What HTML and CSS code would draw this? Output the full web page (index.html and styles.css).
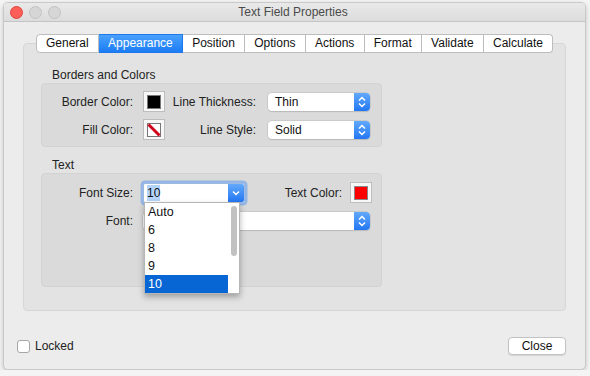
FILE: index.html
```html
<!DOCTYPE html>
<html lang="en">
<head>
    <meta charset="UTF-8">
    <title>Text Field Properties</title>
    <link rel="stylesheet" href="styles.css">
</head>
<body>
    <div class="window">
        <div class="titlebar">
            <div class="lights">
                <span class="light light-close"></span>
                <span class="light"></span>
                <span class="light"></span>
            </div>
            <div class="title">Text Field Properties</div>
        </div>
        <div class="content">
            <div class="tabs">
                <span class="tab">General</span>
                <span class="tab active">Appearance</span>
                <span class="tab">Position</span>
                <span class="tab">Options</span>
                <span class="tab">Actions</span>
                <span class="tab">Format</span>
                <span class="tab">Validate</span>
                <span class="tab">Calculate</span>
            </div>
            <div class="panel">
                <div class="group-title">Borders and Colors</div>
                <div class="group group-borders">
                    <div class="row">
                        <span class="lbl lbl-first">Border Color:</span>
                        <span class="swatch">
                            <svg width="14" height="14" viewBox="0 0 14 14"><rect x="0.5" y="0.5" width="13" height="13" fill="#000" stroke="#777"/></svg>
                        </span>
                        <span class="lbl lbl-second">Line Thickness:</span>
                        <div class="popup popup-short">
                            <span class="popup-value">Thin</span>
                            <span class="popup-arrows">
                                <svg width="16" height="18" viewBox="0 0 16 18"><path d="M5 7.5 L8 4.5 L11 7.5 M5 10.5 L8 13.5 L11 10.5" fill="none" stroke="#fff" stroke-width="1.5"/></svg>
                            </span>
                        </div>
                    </div>
                    <div class="row">
                        <span class="lbl lbl-first">Fill Color:</span>
                        <span class="swatch">
                            <svg width="14" height="14" viewBox="0 0 14 14"><rect x="0.5" y="0.5" width="13" height="13" fill="#fff" stroke="#777"/><path d="M1.5 1.5 L12.5 12.5" stroke="#d0021b" stroke-width="3"/></svg>
                        </span>
                        <span class="lbl lbl-second">Line Style:</span>
                        <div class="popup popup-short">
                            <span class="popup-value">Solid</span>
                            <span class="popup-arrows">
                                <svg width="16" height="18" viewBox="0 0 16 18"><path d="M5 7.5 L8 4.5 L11 7.5 M5 10.5 L8 13.5 L11 10.5" fill="none" stroke="#fff" stroke-width="1.5"/></svg>
                            </span>
                        </div>
                    </div>
                </div>
                <div class="group-title">Text</div>
                <div class="group group-text">
                    <div class="row">
                        <span class="lbl lbl-first">Font Size:</span>
                        <div class="combo">
                            <span class="combo-value"><span class="selected-text">10</span></span>
                            <span class="combo-arrow">
                                <svg width="16" height="18" viewBox="0 0 16 18"><path d="M5 7.5 L8 10.5 L11 7.5" fill="none" stroke="#fff" stroke-width="1.5"/></svg>
                            </span>
                            <ul class="dropdown">
                                <li>Auto</li>
                                <li>6</li>
                                <li>8</li>
                                <li>9</li>
                                <li class="current">10</li>
                                <span class="scroll-thumb"></span>
                            </ul>
                        </div>
                        <span class="lbl lbl-color">Text Color:</span>
                        <span class="swatch">
                            <svg width="14" height="14" viewBox="0 0 14 14"><rect x="0.5" y="0.5" width="13" height="13" fill="#f00" stroke="#888"/></svg>
                        </span>
                    </div>
                    <div class="row">
                        <span class="lbl lbl-first">Font:</span>
                        <div class="popup popup-long">
                            <span class="popup-value"></span>
                            <span class="popup-arrows">
                                <svg width="16" height="18" viewBox="0 0 16 18"><path d="M5 7.5 L8 4.5 L11 7.5 M5 10.5 L8 13.5 L11 10.5" fill="none" stroke="#fff" stroke-width="1.5"/></svg>
                            </span>
                        </div>
                    </div>
                </div>
            </div>
            <div class="footer">
                <label class="check"><span class="check-box"></span>Locked</label>
                <button class="btn">Close</button>
            </div>
        </div>
    </div>
</body>
</html>
```

FILE: styles.css
```css
body {
    margin: 0;
    padding: 2px 4px 0 3px;
    background: #f4f4f4;
    font-family: "Liberation Sans", Arial, sans-serif;
    font-size: 12px;
    color: #222;
}

.window {
    width: 583px;
    height: 368px;
    box-sizing: border-box;
    background: #ececec;
    border: 1px solid #c9c9c9;
    border-radius: 5px;
    box-shadow: 0 2px 5px rgba(0, 0, 0, 0.2);
    overflow: hidden;
}

.titlebar {
    height: 18px;
    background: linear-gradient(#e9e9e9, #dcdcdc);
    border-bottom: 1px solid #c4c4c4;
    display: flex;
    align-items: center;
}

.lights {
    display: flex;
    gap: 6px;
    padding-left: 6px;
}

.light {
    width: 11px;
    height: 11px;
    border-radius: 50%;
    background: #d6d6d6;
    border: 1px solid #c2c2c2;
}

.light-close {
    background: #fc5f57;
    border-color: #e0443e;
}

.title {
    flex: 1;
    text-align: center;
    margin-right: 60px;
    color: #4a4a4a;
}

.content {
    padding: 12px 19px 0 19px;
}

.tabs {
    display: flex;
    justify-content: center;
    position: relative;
    z-index: 1;
    margin-bottom: -10px;
}

.tab {
    height: 17px;
    line-height: 17px;
    padding: 0 9.2px;
    background: #fff;
    border: 1px solid #bdbdbd;
    border-left: none;
    color: #111;
}

.tab:first-child {
    border-left: 1px solid #bdbdbd;
    border-radius: 4px 0 0 4px;
}

.tab:last-child {
    border-radius: 0 4px 4px 0;
}

.tab.active {
    background: linear-gradient(#4aa1fd, #1b7cf4);
    border-color: #1f78ea;
    color: #fff;
}

.panel {
    height: 268px;
    box-sizing: border-box;
    background: #e3e3e3;
    border: 1px solid #d6d6d6;
    border-radius: 4px;
    padding: 24px 0 0 17px;
}

.group-title {
    line-height: 15px;
    padding-left: 11px;
}

.group {
    width: 341px;
    box-sizing: border-box;
    background: #dadada;
    border: 1px solid #d2d2d2;
    border-radius: 4px;
}

.group-borders {
    height: 64px;
    padding-top: 7px;
    margin-bottom: 11px;
}

.group-text {
    height: 114px;
    padding-top: 8px;
}

.row {
    display: flex;
    align-items: center;
    height: 21px;
    margin-bottom: 7px;
}

.lbl {
    text-align: right;
    white-space: nowrap;
}

.lbl-first {
    width: 91px;
    margin-right: 10px;
}

.lbl-second {
    width: 91px;
    margin-right: 12px;
}

.lbl-color {
    width: 97px;
    margin-right: 8px;
}

.swatch {
    width: 20px;
    height: 19px;
    background: #f7f7f7;
    border: 1px solid #bdbdbd;
    display: flex;
    align-items: center;
    justify-content: center;
}

.popup {
    height: 18px;
    display: flex;
    background: #fff;
    border-radius: 4px;
    box-shadow: 0 0 0 0.5px #b9b9b9, 0 1px 1px rgba(0, 0, 0, 0.15);
}

.popup-short {
    width: 102px;
}

.popup-long {
    width: 227px;
}

.popup-value {
    flex: 1;
    padding-left: 7px;
    line-height: 18px;
    color: #111;
}

.popup-arrows,
.combo-arrow {
    width: 16px;
    background: linear-gradient(#62a9fb, #2377f3);
    border-radius: 0 4px 4px 0;
    display: flex;
    align-items: center;
}

.combo {
    position: relative;
    width: 100px;
    height: 18px;
    display: flex;
    background: #fff;
    border: 1px solid #9db9e3;
    border-radius: 2px;
    box-shadow: 0 0 0 2.5px rgba(104, 160, 236, 0.6);
}

.combo-value {
    flex: 1;
    padding-left: 3px;
    line-height: 18px;
    color: #111;
}

.selected-text {
    background: #b3d4fc;
    padding: 1px 0;
}

.combo-arrow {
    border-radius: 0 2px 2px 0;
}

.dropdown {
    position: absolute;
    left: 0;
    top: 18px;
    width: 94px;
    height: 90px;
    margin: 0;
    padding: 0;
    list-style: none;
    background: #fff;
    border: 1px solid #b6b6b6;
    box-shadow: 0 3px 6px rgba(0, 0, 0, 0.3);
    z-index: 2;
}

.dropdown li {
    height: 18px;
    line-height: 18px;
    padding-left: 3px;
    margin-right: 11px;
    font-size: 12.5px;
    color: #111;
}

.dropdown li.current {
    background: #0865d4;
    color: #fff;
}

.scroll-thumb {
    position: absolute;
    right: 2px;
    top: 3px;
    width: 6px;
    height: 50px;
    border-radius: 3px;
    background: #c2c2c2;
}

.footer {
    display: flex;
    justify-content: space-between;
    align-items: center;
    margin-top: 26px;
    margin-left: -6px;
}

.check {
    display: flex;
    align-items: center;
    gap: 5px;
}

.check-box {
    width: 11px;
    height: 11px;
    background: #fff;
    border: 1px solid #a6a6a6;
    border-radius: 3px;
}

.btn {
    width: 58px;
    height: 18px;
    padding: 0;
    font-family: "Liberation Sans", Arial, sans-serif;
    font-size: 12px;
    color: #111;
    background: #fff;
    border: 1px solid #c2c2c2;
    border-radius: 4px;
    box-shadow: 0 1px 1px rgba(0, 0, 0, 0.1);
}
```
